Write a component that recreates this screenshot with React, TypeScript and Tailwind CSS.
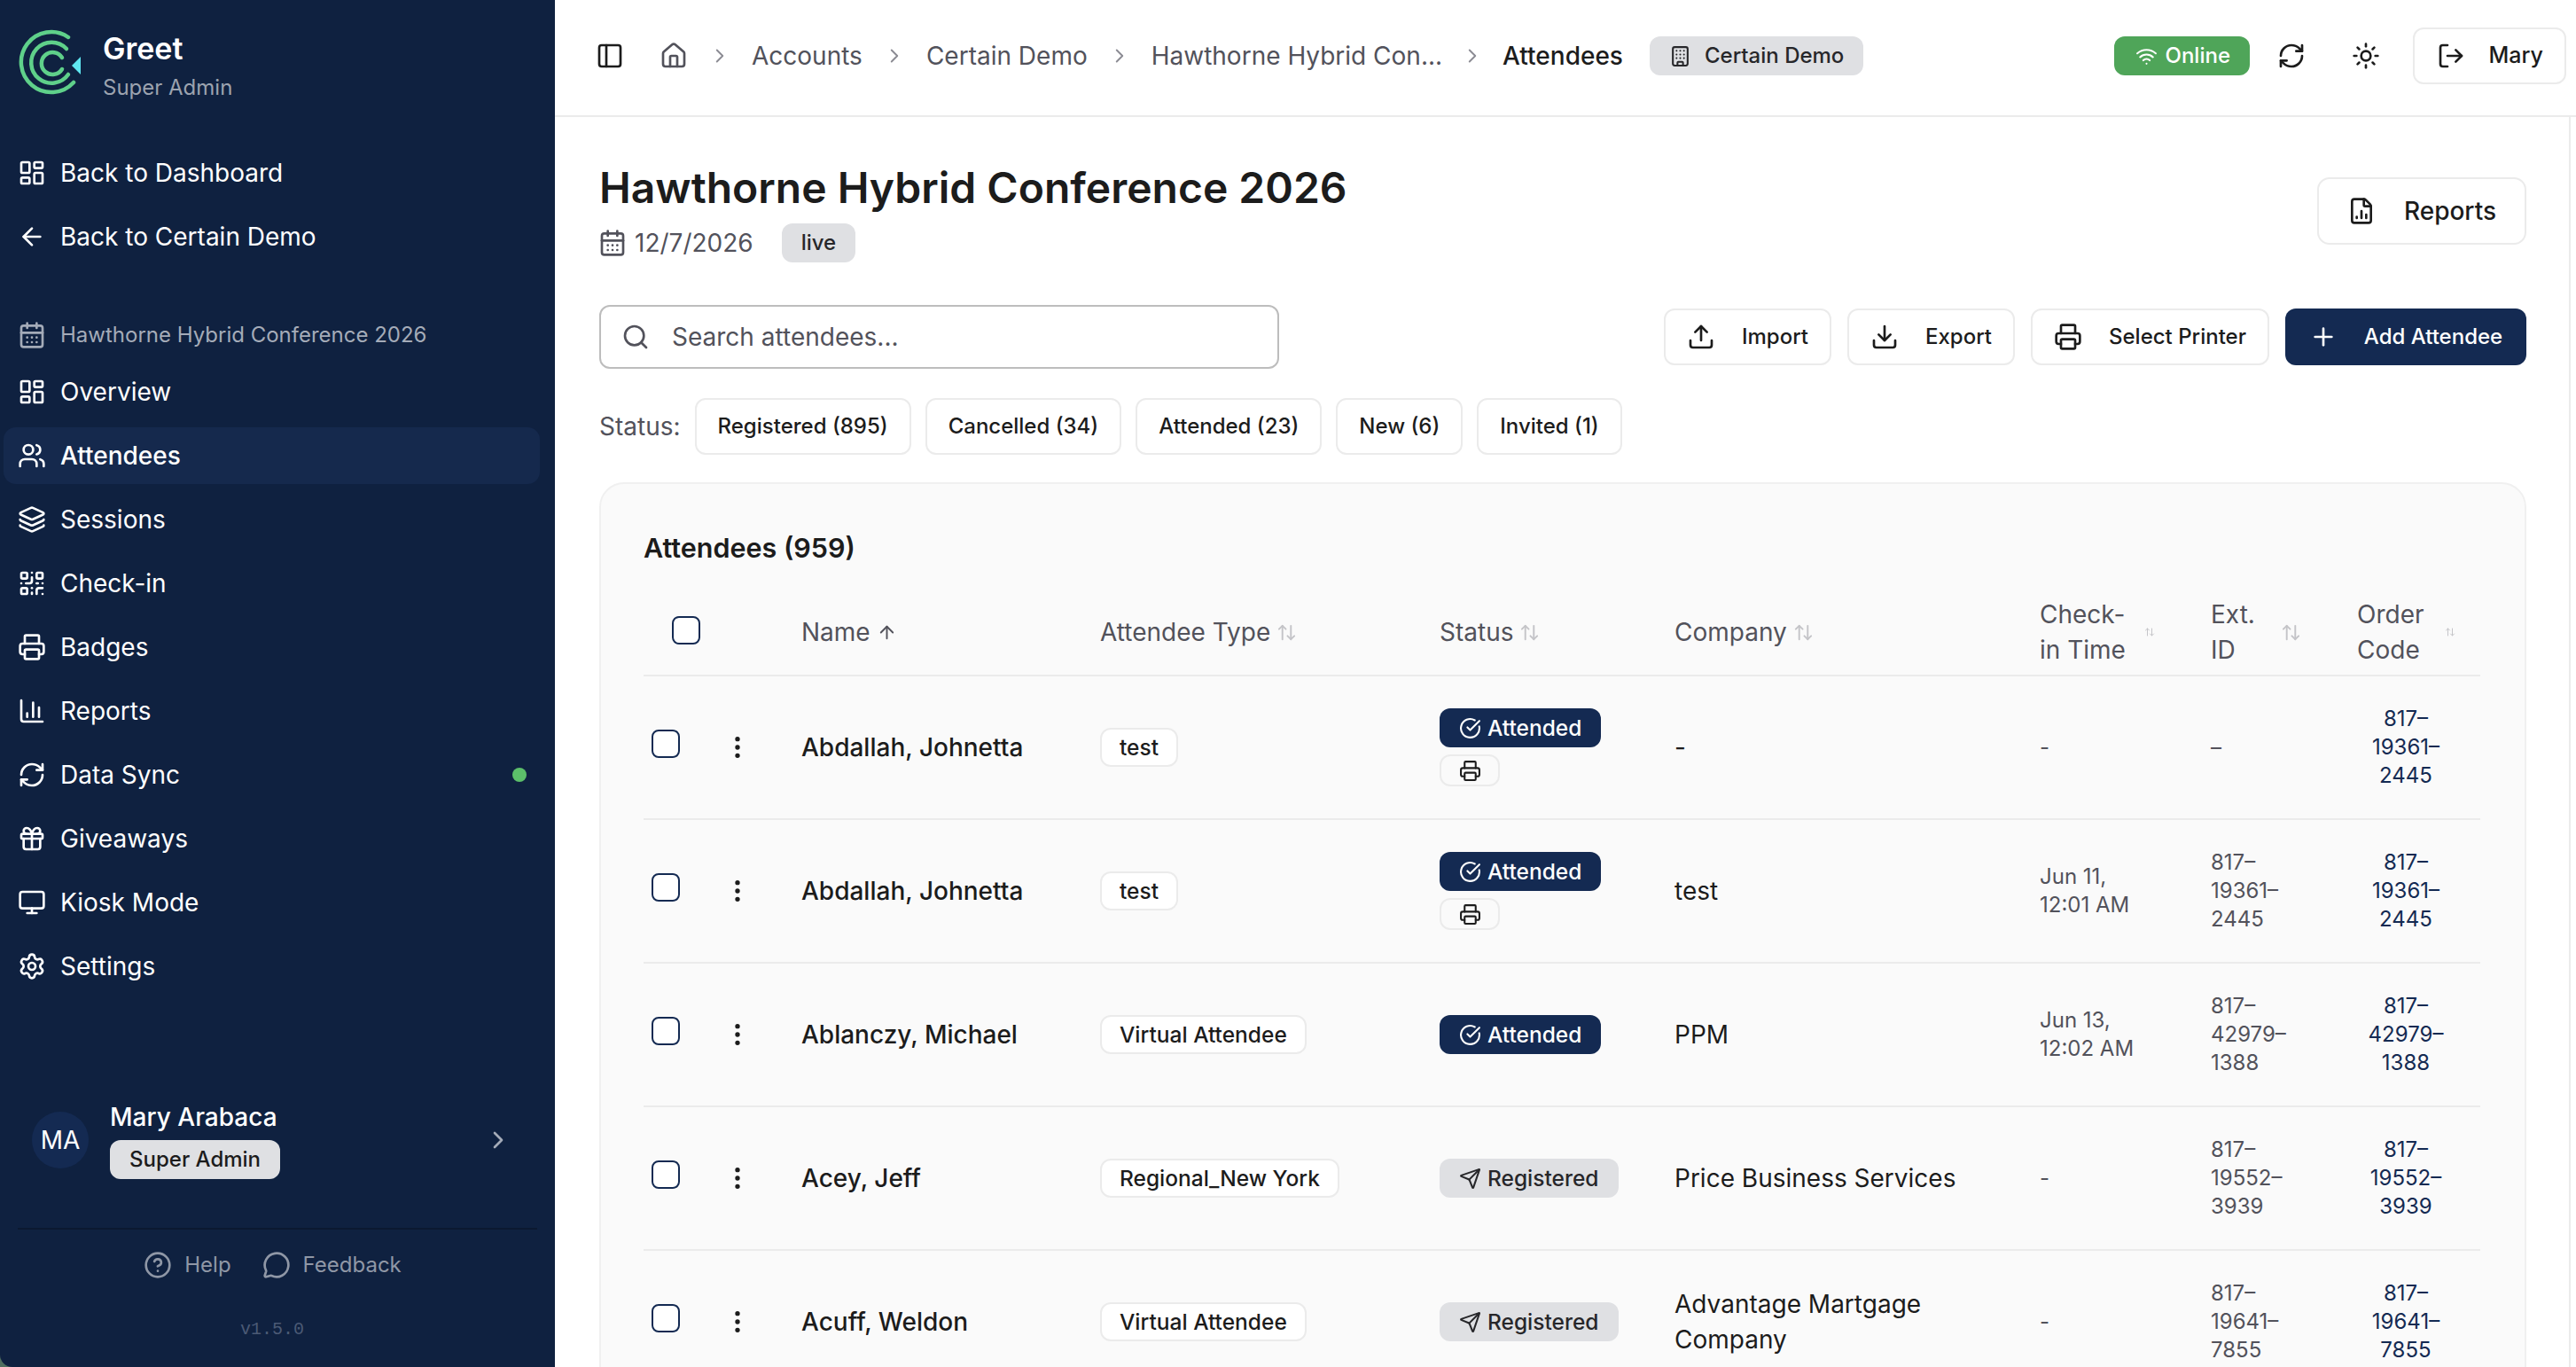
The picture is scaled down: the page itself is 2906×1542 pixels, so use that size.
import {
  ArrowLeft,
  ArrowUp,
  ArrowUpDown,
  Building,
  CalendarDays,
  ChartColumn,
  ChevronRight,
  CircleCheckBig,
  CircleHelp,
  Download,
  EllipsisVertical,
  FileChartColumn,
  Gift,
  House,
  Layers,
  LayoutDashboard,
  LogOut,
  MessageCircle,
  Monitor,
  PanelLeft,
  Plus,
  Printer,
  QrCode,
  RefreshCw,
  Search,
  Send,
  Settings,
  Sun,
  Upload,
  Users,
  Wifi,
} from "lucide-react";

const navItems = [
  { label: "Overview", icon: LayoutDashboard },
  { label: "Attendees", icon: Users, active: true },
  { label: "Sessions", icon: Layers },
  { label: "Check-in", icon: QrCode },
  { label: "Badges", icon: Printer },
  { label: "Reports", icon: ChartColumn },
  { label: "Data Sync", icon: RefreshCw, dot: true },
  { label: "Giveaways", icon: Gift },
  { label: "Kiosk Mode", icon: Monitor },
  { label: "Settings", icon: Settings },
];

const crumbs = ["Accounts", "Certain Demo", "Hawthorne Hybrid Con..."];

const statusFilters = ["Registered (895)", "Cancelled (34)", "Attended (23)", "New (6)", "Invited (1)"];

const rows = [
  { name: "Abdallah, Johnetta", type: "test", status: "Attended", printed: true, company: "-", checkIn: "-", extId: "–", code: "817–19361–2445" },
  { name: "Abdallah, Johnetta", type: "test", status: "Attended", printed: true, company: "test", checkIn: "Jun 11, 12:01 AM", extId: "817–19361–2445", code: "817–19361–2445" },
  { name: "Ablanczy, Michael", type: "Virtual Attendee", status: "Attended", company: "PPM", checkIn: "Jun 13, 12:02 AM", extId: "817–42979–1388", code: "817–42979–1388" },
  { name: "Acey, Jeff", type: "Regional_New York", status: "Registered", company: "Price Business Services", checkIn: "-", extId: "817–19552–3939", code: "817–19552–3939" },
  { name: "Acuff, Weldon", type: "Virtual Attendee", status: "Registered", company: "Advantage Martgage Company", checkIn: "-", extId: "817–19641–7855", code: "817–19641–7855" },
];

function Logo() {
  return (
    <svg width="72" height="76" viewBox="0 0 72 76" fill="none" className="mb-[8px] shrink-0">
      <path d="M57 9A34 34 0 1 0 63 60" stroke="#5fd08a" strokeWidth="4.5" strokeLinecap="round" />
      <path d="M55 22A23 23 0 1 0 57 51" stroke="#5fd08a" strokeWidth="4.5" strokeLinecap="round" />
      <path d="M50 32A12.5 12.5 0 1 0 50 45" stroke="#5fd08a" strokeWidth="4.5" strokeLinecap="round" />
      <path d="M71 31L61 41L71 51Z" fill="#5fe6f0" />
    </svg>
  );
}

function Sidebar() {
  return (
    <aside className="flex h-full w-[626px] shrink-0 flex-col rounded-bl-[14px] bg-[#0f2140] text-white">
      <div className="flex h-[130px] items-center gap-[24px] pl-[20px] pt-[19px]">
        <Logo />
        <div>
          <div className="text-[34px] leading-[44px] font-semibold">Greet</div>
          <div className="mt-[5px] text-[24px] leading-[34px] text-[#9ca3af]">Super Admin</div>
        </div>
      </div>

      <div className="mt-[33px] flex flex-col gap-[8px] px-[4px]">
        <div className="flex h-[64px] items-center gap-[16px] px-[16px] text-[28px]">
          <LayoutDashboard size={32} strokeWidth={2} />
          Back to Dashboard
        </div>
        <div className="flex h-[64px] items-center gap-[16px] px-[16px] text-[28px]">
          <ArrowLeft size={32} strokeWidth={2} />
          Back to Certain Demo
        </div>
      </div>

      <div className="mt-[55px] flex h-[48px] items-center gap-[16px] pl-[20px] text-[24px] text-[#a4abb8]">
        <CalendarDays size={32} strokeWidth={2} />
        Hawthorne Hybrid Conference 2026
      </div>

      <nav className="mt-[8px] flex flex-col gap-[8px] pl-[4px] pr-[17px]">
        {navItems.map((item) => (
          <div
            key={item.label}
            className={`flex h-[64px] items-center gap-[16px] rounded-[14px] pl-[16px] pr-[18px] text-[28px] ${item.active ? "bg-[#15294d] font-medium" : ""}`}
          >
            <item.icon size={32} strokeWidth={2} />
            <span className="flex-1">{item.label}</span>
            {item.dot && <span className="-mr-[3px] size-[16px] rounded-full bg-[#5cbf6a]" />}
          </div>
        ))}
      </nav>

      <div className="mt-auto flex h-[72px] items-center pl-[36px] pr-[48px]">
        <div className="flex size-[64px] items-center justify-center rounded-full bg-[#142a52] text-[28px]">MA</div>
        <div className="ml-[24px] flex-1">
          <div className="text-[28px] leading-[36px] font-medium">Mary Arabaca</div>
          <div className="mt-[8px] inline-flex h-[44px] items-center rounded-[12px] bg-[#dfe0e3] px-[22px] text-[24px] font-medium text-[#1c1c1c]">
            Super Admin
          </div>
        </div>
        <ChevronRight size={32} className="text-[#a4abb8]" />
      </div>

      <div className="mx-[20px] mt-[63px] border-t-2 border-[#0b1930]" />
      <div className="mt-[22px] flex items-center justify-center gap-[35px] pr-[11px] text-[24px] text-[#8f97a6]">
        <span className="flex items-center gap-[14px]">
          <CircleHelp size={32} />
          Help
        </span>
        <span className="flex items-center gap-[14px]">
          <MessageCircle size={32} />
          Feedback
        </span>
      </div>
      <div className="mt-[41px] mb-[28px] pr-[12px] text-center font-['Liberation_Mono',monospace] text-[20px] leading-[28px] text-[#4b5a75]">v1.5.0</div>
    </aside>
  );
}

function TopBar() {
  return (
    <header className="flex h-[132px] shrink-0 items-center border-b-2 border-[#ebebeb] pb-[4px] pl-[46px] pr-[11px]">
      <PanelLeft size={32} className="text-[#1c1c1c]" />
      <House size={32} className="ml-[40px] text-[#52525b]" />
      {crumbs.map((crumb) => (
        <span key={crumb} className="flex items-center text-[#52525b]">
          <ChevronRight size={26} className="mx-[23px] text-[#8b8b93]" strokeWidth={1.75} />
          <span className="text-[28px]">{crumb}</span>
        </span>
      ))}
      <ChevronRight size={26} className="mx-[21px] text-[#8b8b93]" strokeWidth={1.75} />
      <span className="text-[28px] font-medium text-[#1c1c1c]">Attendees</span>
      <span className="ml-[30px] flex h-[44px] items-center gap-[15px] rounded-[12px] bg-[#dfe0e3] px-[22px] text-[24px] font-medium text-[#27272a]">
        <Building size={25} />
        Certain Demo
      </span>
      <span className="ml-auto flex h-[44px] items-center gap-[9px] rounded-[12px] bg-[#4fa559] pl-[24px] pr-[22px] text-[24px] font-medium text-white">
        <Wifi size={25} />
        Online
      </span>
      <RefreshCw size={32} className="ml-[31px] text-[#1c1c1c]" />
      <Sun size={32} className="ml-[52px] text-[#1c1c1c]" />
      <button className="ml-[37px] flex h-[64px] w-[173px] items-center justify-between rounded-[12px] border-2 border-[#ebebeb] bg-white pl-[25px] pr-[24px] text-[25px] font-medium text-[#1c1c1c]">
        <LogOut size={32} />
        Mary
      </button>
    </header>
  );
}

function OutlineButton({ icon: Icon, label, width }: { icon: typeof Upload; label: string; width: string }) {
  return (
    <button className={`flex h-[64px] items-center justify-center gap-[30px] rounded-[12px] border-2 border-[#ebebeb] bg-white text-[24px] font-medium text-[#1c1c1c] ${width}`}>
      <Icon size={32} />
      {label}
    </button>
  );
}

function SortHead({ label, size = 23, active }: { label: string; size?: number; active?: boolean }) {
  const Icon = active ? ArrowUp : ArrowUpDown;
  return (
    <div className="flex items-center gap-[7px] text-[28px] leading-[40px] font-normal text-[#52525b]">
      <span>{label}</span>
      <Icon size={size} className={`shrink-0 ${active ? "text-[#52525b]" : "text-[#c4c4c8]"}`} />
    </div>
  );
}

function StatusBadge({ status }: { status: string }) {
  if (status === "Attended") {
    return (
      <span className="inline-flex h-[44px] items-center gap-[7px] rounded-[12px] bg-[#142a52] px-[22px] text-[24.5px] font-medium text-white">
        <CircleCheckBig size={25} />
        Attended
      </span>
    );
  }
  return (
    <span className="inline-flex h-[44px] items-center gap-[7px] rounded-[12px] bg-[#dfe0e3] px-[22px] text-[24.5px] font-medium text-[#27272a]">
      <Send size={25} />
      Registered
    </span>
  );
}

function AttendeeTable() {
  return (
    <table className="w-[2072px] table-fixed border-collapse">
      <colgroup>
        <col className="w-[159px]" />
        <col className="w-[337px]" />
        <col className="w-[383px]" />
        <col className="w-[265px]" />
        <col className="w-[412px]" />
        <col className="w-[193px]" />
        <col className="w-[165px]" />
        <col className="w-[158px]" />
      </colgroup>
      <thead>
        <tr className="h-[97px] border-b-2 border-[#ebebeb] text-left">
          <th className="pl-[32px] align-middle">
            <div className="mb-[4px] h-[32px] w-[32px] rounded-[8px] border-2 border-[#142a52] bg-white" />
          </th>
          <th className="pl-[19px]"><SortHead label="Name" active /></th>
          <th className="pl-[19px]"><SortHead label="Attendee Type" /></th>
          <th className="pl-[19px]"><SortHead label="Status" /></th>
          <th className="pl-[19px]"><SortHead label="Company" /></th>
          <th className="pl-[19px] pr-[44px]"><SortHead label="Check-in Time" size={12} /></th>
          <th className="pl-[19px] pr-[44px]"><SortHead label="Ext. ID" /></th>
          <th className="pl-[19px] pr-[28px]"><SortHead label="Order Code" size={12} /></th>
        </tr>
      </thead>
      <tbody>
        {rows.map((row, i) => (
          <tr key={i} className="h-[162px] border-b-2 border-[#ebebeb]">
            <td className="pl-[9px]">
              <div className="flex items-center">
                <div className="mb-[8px] h-[32px] w-[32px] rounded-[8px] border-2 border-[#142a52] bg-white" />
                <EllipsisVertical size={32} className="ml-[49px] text-[#1c1c1c]" />
              </div>
            </td>
            <td className="pl-[19px] text-[28px] font-medium text-[#1c1c1c]">{row.name}</td>
            <td className="pl-[19px]">
              <span className="inline-flex h-[44px] items-center rounded-[12px] border-2 border-[#ebebeb] bg-white px-[20px] text-[24.5px] font-medium text-[#1c1c1c]">
                {row.type}
              </span>
            </td>
            <td className="pl-[19px]">
              <div className="flex flex-col items-start gap-[8px]">
                <StatusBadge status={row.status} />
                {row.printed && (
                  <span className="flex h-[36px] w-[68px] items-center justify-center rounded-[12px] border-2 border-[#ebebeb]">
                    <Printer size={25} className="text-[#1c1c1c]" />
                  </span>
                )}
              </div>
            </td>
            <td className="pl-[19px] pr-[40px] text-[28px] leading-[40px] text-[#1c1c1c]">{row.company}</td>
            <td className="pl-[19px] pr-[50px] text-[24px] leading-[32px] text-[#52525b]">{row.checkIn}</td>
            <td className="pl-[19px] pr-[40px] text-[24px] leading-[32px] text-[#52525b]">{row.extId}</td>
            <td className="pl-[19px] pr-[29px] text-center text-[24px] leading-[32px] text-[#142a52]">{row.code}</td>
          </tr>
        ))}
      </tbody>
    </table>
  );
}

export default function App() {
  return (
    <div className="flex h-[1542px] w-[2906px] overflow-hidden bg-[#4f6f60] font-['Inter',sans-serif] text-[#1c1c1c]">
      <Sidebar />
      <main className="flex h-full min-w-0 flex-1 flex-col bg-white">
        <TopBar />
        <div className="mr-[6px] min-h-0 flex-1 overflow-hidden border-r-2 border-[#ebebeb] pl-[50px] pr-[48px]">
          <div className="mt-[48px] flex items-start justify-between">
            <div>
              <h1 className="text-[48px] leading-[64px] font-semibold text-[#1c1c1c]">Hawthorne Hybrid Conference 2026</h1>
              <div className="mt-[8px] flex items-center">
                <CalendarDays size={32} className="-ml-[1px] text-[#52525b]" />
                <span className="ml-[9px] text-[28px] text-[#52525b]">12/7/2026</span>
                <span className="ml-[32px] flex h-[44px] items-center rounded-[12px] bg-[#dfe0e3] px-[22px] text-[24px] font-medium text-[#27272a]">live</span>
              </div>
            </div>
            <button className="mt-[20px] flex h-[76px] w-[236px] items-center justify-center gap-[32px] rounded-[14px] border-2 border-[#ebebeb] bg-white text-[28px] font-medium text-[#1c1c1c]">
              <FileChartColumn size={32} />
              Reports
            </button>
          </div>

          <div className="mt-[48px] flex items-center justify-between">
            <div className="flex h-[72px] w-[767px] items-center rounded-[12px] border-2 border-[#bdbdbd] bg-white pl-[23px] pr-[24px]">
              <Search size={32} className="text-[#52525b]" />
              <span className="ml-[25px] text-[28px] text-[#52525b]">Search attendees...</span>
            </div>
            <div className="flex items-center gap-[18px]">
              <OutlineButton icon={Upload} label="Import" width="w-[189px]" />
              <OutlineButton icon={Download} label="Export" width="w-[189px]" />
              <OutlineButton icon={Printer} label="Select Printer" width="w-[269px]" />
              <button className="flex h-[64px] w-[272px] items-center justify-center gap-[30px] rounded-[12px] bg-[#142a52] text-[24px] font-medium text-white">
                <Plus size={32} />
                Add Attendee
              </button>
            </div>
          </div>

          <div className="mt-[33px] flex items-center gap-[16px]">
            <span className="text-[28px] text-[#52525b]">Status:</span>
            {statusFilters.map((filter) => (
              <span key={filter} className="flex h-[64px] items-center rounded-[12px] border-2 border-[#ebebeb] bg-white px-[24px] text-[24px] font-medium text-[#1c1c1c]">
                {filter}
              </span>
            ))}
          </div>

          <section className="mt-[31px] rounded-[28px] border-2 border-[#f0f0f0] bg-[#fafafa] px-[48px] pb-[48px] pt-[52px]">
            <h2 className="text-[30.5px] leading-[40px] font-semibold text-[#1c1c1c]">Attendees (959)</h2>
            <div className="mt-[27px]">
              <AttendeeTable />
            </div>
          </section>
        </div>
      </main>
    </div>
  );
}
